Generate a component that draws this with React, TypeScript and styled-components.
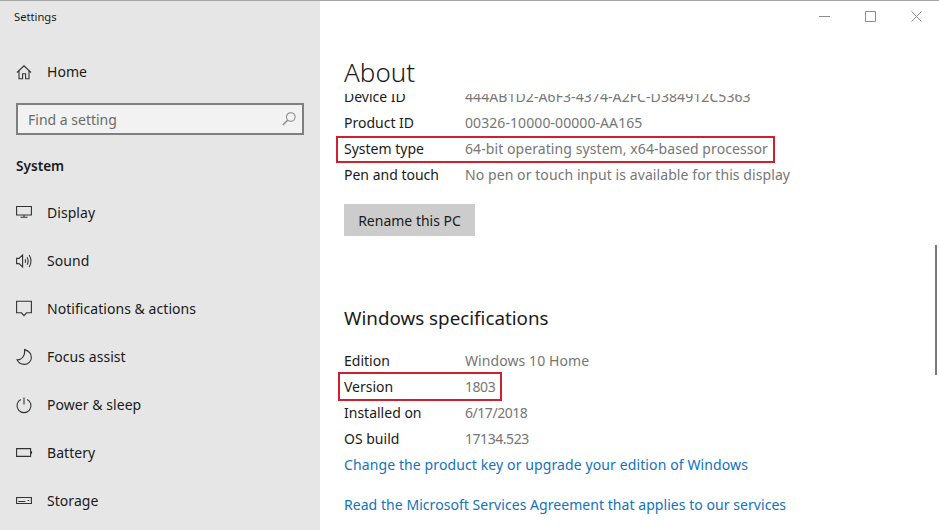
import React from 'react';
import styled, { createGlobalStyle } from 'styled-components';

const GlobalStyle = createGlobalStyle`
    html, body {
        margin: 0;
        padding: 0;
        background: #fff;
    }
    body {
        font-family: "Noto Sans", "Open Sans", "Liberation Sans", sans-serif;
        -webkit-font-smoothing: antialiased;
    }
`;

const stroke = { fill: 'none', stroke: 'currentColor', strokeWidth: 1.1 };

const HomeIcon = () => (
    <svg width="16" height="16" viewBox="0 0 16 16" {...stroke}>
        <path d="M1 8.500 8 1.800l7 6.700M3 6.800v8h3.600V9.800h3v5H13v-8" />
    </svg>
);
const SearchIcon = () => (
    <svg width="14" height="14" viewBox="0 0 14 14" {...stroke}>
        <circle cx="8.800" cy="5" r="4.300" />
        <path d="M5.600 8.200.8 13" strokeWidth="1.4" />
    </svg>
);
const DisplayIcon = () => (
    <svg width="16" height="16" viewBox="0 0 16 16" {...stroke}>
        <path d="M.6 1.500h14.800v8.500H.6zM8 10v2M4.500 12.300h7" />
    </svg>
);
const SoundIcon = () => (
    <svg width="16" height="16" viewBox="0 0 16 16" {...stroke}>
        <path d="M.6 5.400h2.400L6.600 2v12L3 10.600H.6zM9 6.200q1.200 1.800 0 3.600M11 4.200q2.400 3.800 0 7.600M13.200 2q3.600 6 0 12" />
    </svg>
);
const NotificationIcon = () => (
    <svg width="16" height="16" viewBox="0 0 16 16" {...stroke}>
        <path d="M.6 .2h14.800v11.600h-4.800L8 14.600l-2.600-2.800H.6z" />
    </svg>
);
const MoonIcon = () => (
    <svg width="16" height="16" viewBox="0 0 16 16" {...stroke}>
        <path d="M8.600.6c4 1.200 6.800 4 6.800 7.800 0 3.800-3.200 7-7.200 7-3.200 0-5.800-1.800-7.200-4.600 4.400.4 8.400-3.800 7.600-10.200z" />
    </svg>
);
const PowerIcon = () => (
    <svg width="16" height="16" viewBox="0 0 16 16" {...stroke}>
        <path d="M4.800 2.400a7 7 0 1 0 6.400 0M8 .4v7" />
    </svg>
);
const BatteryIcon = () => (
    <svg width="16" height="16" viewBox="0 0 16 16" {...stroke}>
        <path d="M.6 3.600h14v7.800H.6zM15.500 6.200v2.600" />
    </svg>
);
const StorageIcon = () => (
    <svg width="16" height="16" viewBox="0 0 16 16" {...stroke}>
        <path d="M.6 4.500h14.800v6H.6zM11.600 7.500h1.600M2.400 8.500h7" />
    </svg>
);

const navItems = [
    { label: 'Display', icon: <DisplayIcon /> },
    { label: 'Sound', icon: <SoundIcon /> },
    { label: 'Notifications & actions', icon: <NotificationIcon /> },
    { label: 'Focus assist', icon: <MoonIcon /> },
    { label: 'Power & sleep', icon: <PowerIcon /> },
    { label: 'Battery', icon: <BatteryIcon /> },
    { label: 'Storage', icon: <StorageIcon /> },
];

const App: React.FC = () => {
    return (
        <Page>
            <GlobalStyle />
            <TopLine />
            <Columns>
                <Sidebar>
                    <WindowTitle>Settings</WindowTitle>
                    <NavRow>
                        <NavIcon><HomeIcon /></NavIcon>
                        <NavLabel>Home</NavLabel>
                    </NavRow>
                    <SearchBox>
                        <SearchText>Find a setting</SearchText>
                        <SearchGlyph><SearchIcon /></SearchGlyph>
                    </SearchBox>
                    <GroupTitle>System</GroupTitle>
                    <NavList>
                        {navItems.map((item) => (
                            <NavRow key={item.label}>
                                <NavIcon>{item.icon}</NavIcon>
                                <NavLabel>{item.label}</NavLabel>
                            </NavRow>
                        ))}
                    </NavList>
                </Sidebar>
                <Main>
                    <WindowControls>
                        <ControlButton>
                            <svg width="11" height="11" viewBox="0 0 11 11"><path d="M0 5.500h11" stroke="#8a8a8a" /></svg>
                        </ControlButton>
                        <ControlButton>
                            <svg width="11" height="11" viewBox="0 0 11 11"><path d="M.5.500h10v10H.5z" fill="none" stroke="#8a8a8a" /></svg>
                        </ControlButton>
                        <ControlButton>
                            <svg width="11" height="11" viewBox="0 0 11 11"><path d="M.5.500l10 10M10.500.500l-10 10" stroke="#8a8a8a" /></svg>
                        </ControlButton>
                    </WindowControls>
                    <PageTitle>About</PageTitle>
                    <ScrollArea>
                        <ScrolledContent>
                            <InfoRow>
                                <InfoLabel>Device ID</InfoLabel>
                                <InfoValue>444AB1D2-A6F3-4374-A2FC-D384912C5363</InfoValue>
                            </InfoRow>
                            <InfoRow>
                                <InfoLabel>Product ID</InfoLabel>
                                <InfoValue>00326-10000-00000-AA165</InfoValue>
                            </InfoRow>
                            <InfoRow>
                                <InfoLabel>System type</InfoLabel>
                                <InfoValue>64-bit operating system, x64-based processor</InfoValue>
                                <SystemMark />
                            </InfoRow>
                            <InfoRow>
                                <InfoLabel>Pen and touch</InfoLabel>
                                <InfoValue>No pen or touch input is available for this display</InfoValue>
                            </InfoRow>
                            <RenameButton>Rename this PC</RenameButton>
                            <SectionTitle>Windows specifications</SectionTitle>
                            <InfoRow>
                                <InfoLabel>Edition</InfoLabel>
                                <InfoValue>Windows 10 Home</InfoValue>
                            </InfoRow>
                            <InfoRow>
                                <InfoLabel>Version</InfoLabel>
                                <InfoValue $numeric>1803</InfoValue>
                                <VersionMark />
                            </InfoRow>
                            <InfoRow>
                                <InfoLabel>Installed on</InfoLabel>
                                <InfoValue $numeric>6/17/2018</InfoValue>
                            </InfoRow>
                            <InfoRow>
                                <InfoLabel>OS build</InfoLabel>
                                <InfoValue $numeric>17134.523</InfoValue>
                            </InfoRow>
                            <LinkRow>Change the product key or upgrade your edition of Windows</LinkRow>
                            <SecondLink>Read the Microsoft Services Agreement that applies to our services</SecondLink>
                        </ScrolledContent>
                    </ScrollArea>
                    <ScrollThumb />
                </Main>
            </Columns>
        </Page>
    );
};

export default App;

const Page = styled.div`
    width: 939px;
    height: 530px;
    overflow: hidden;
    display: flex;
    flex-direction: column;
    background: #fff;
`;

const TopLine = styled.div`
    flex: none;
    height: 1px;
    background: #a6a6a6;
`;

const Columns = styled.div`
    flex: 1;
    min-height: 0;
    display: flex;
`;

const Sidebar = styled.aside`
    flex: none;
    width: 320px;
    box-sizing: border-box;
    padding-left: 16px;
    background: #e6e6e6;
    color: #1a1a1a;
    font-size: 14px;
`;

const WindowTitle = styled.div`
    margin-left: -2px;
    height: 47px;
    line-height: 32px;
    font-size: 11.2px;
`;

const NavRow = styled.div`
    display: flex;
    align-items: center;
    height: 48px;
`;

const NavIcon = styled.span`
    flex: none;
    width: 31px;
    height: 16px;
    color: #333;

    svg {
        display: block;
        overflow: visible;
    }
`;

const NavLabel = styled.span`
    font-size: 14px;
    line-height: 20px;
    letter-spacing: 0.05px;
`;

const SearchBox = styled.div`
    box-sizing: border-box;
    width: 288px;
    height: 32px;
    margin-top: 7px;
    padding: 0 6px 0 10px;
    display: flex;
    align-items: center;
    justify-content: space-between;
    border: 2px solid #7f7f7f;
    background: #f2f2f2;
`;

const SearchText = styled.span`
    color: #6b6b6b;
    font-size: 14px;
`;

const SearchGlyph = styled.span`
    height: 14px;
    color: #8a8a8a;

    svg {
        display: block;
    }
`;

const GroupTitle = styled.div`
    margin-top: 19px;
    height: 24px;
    line-height: 24px;
    font-size: 13.6px;
    font-weight: 600;
`;

const NavList = styled.nav`
    margin-top: 11px;
`;

const Main = styled.main`
    position: relative;
    flex: 1;
    min-width: 0;
    display: flex;
    flex-direction: column;
`;

const WindowControls = styled.div`
    flex: none;
    display: flex;
    justify-content: flex-end;
    height: 30px;
`;

const ControlButton = styled.div`
    width: 46px;
    display: flex;
    align-items: center;
    justify-content: center;
`;

const PageTitle = styled.h1`
    flex: none;
    margin: 0;
    padding-left: 24px;
    height: 63px;
    line-height: 82px;
    font-size: 26px;
    font-weight: 300;
    color: #1a1a1a;
`;

const ScrollArea = styled.div`
    flex: 1;
    min-height: 0;
    overflow: hidden;
    padding-left: 24px;
    font-size: 14px;
`;

const ScrolledContent = styled.div`
    margin-top: -10px;
`;

const InfoRow = styled.div`
    position: relative;
    display: flex;
    height: 26px;
    line-height: 26px;
`;

const InfoLabel = styled.span`
    flex: none;
    width: 121px;
    color: #1a1a1a;
`;

const InfoValue = styled.span<{ $numeric?: boolean }>`
    color: #767676;
    letter-spacing: ${(props) => (props.$numeric ? '-0.45px' : '0.08px')};
`;

const Mark = styled.div`
    position: absolute;
    box-sizing: border-box;
    border: 2px solid #cf2030;
`;

const SystemMark = styled(Mark)`
    left: -8px;
    top: 0;
    width: 439px;
    height: 27px;
`;

const VersionMark = styled(Mark)`
    left: -6px;
    top: -2px;
    width: 164px;
    height: 29px;
`;

const RenameButton = styled.button`
    display: block;
    width: 131px;
    height: 32px;
    margin-top: 16px;
    border: none;
    padding: 0;
    background: #cccccc;
    color: #1a1a1a;
    font: inherit;
`;

const SectionTitle = styled.h2`
    margin: 66px 0 14px;
    height: 32px;
    line-height: 32px;
    font-size: 18.8px;
    font-weight: 400;
    color: #1a1a1a;
`;

const LinkRow = styled.div`
    height: 26px;
    line-height: 26px;
    color: #1172c0;
    letter-spacing: 0.11px;
`;

const SecondLink = styled(LinkRow)`
    margin-top: 14px;
    letter-spacing: 0.05px;
`;

const ScrollThumb = styled.div`
    position: absolute;
    top: 244px;
    right: 2px;
    width: 2px;
    height: 130px;
    background: #7a7a7a;
`;
